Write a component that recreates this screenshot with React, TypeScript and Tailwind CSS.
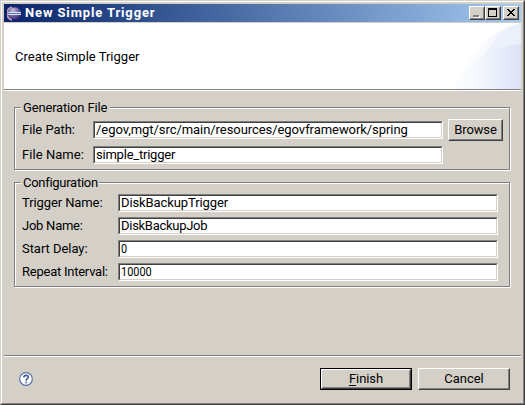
import React from "react";

const sunken =
  "box-border h-[18px] border border-t-[#808080] border-l-[#808080] border-b-white border-r-white";
const sunkenInner =
  "flex h-full items-center border border-t-[#404040] border-l-[#404040] border-b-[#d4d0c8] border-r-[#d4d0c8] bg-white pl-[1px] leading-[14px] whitespace-pre";
const raised =
  "border border-t-white border-l-white border-b-[#404040] border-r-[#404040] bg-[#d4d0c8]";
const raisedInner =
  "flex h-full w-full items-center justify-center border border-t-[#d4d0c8] border-l-[#d4d0c8] border-b-[#808080] border-r-[#808080]";

function Field({ value, width, track }: { value: string; width: string; track: string }) {
  return (
    <div className={`${sunken} ${width}`}>
      <div className={sunkenInner}>
        <span className={`inline-block origin-left ${track}`}>{value}</span>
      </div>
    </div>
  );
}

function Label({ text, width, track }: { text: string; width: string; track: string }) {
  return <label className={`shrink-0 whitespace-pre leading-[18px] ${width} ${track}`}>{text}</label>;
}

function Group({ title, width, track, className, children }: {
  title: string;
  width: string;
  track: string;
  className: string;
  children: React.ReactNode;
}) {
  return (
    <section className={`ml-[10px] w-[496px] border border-[#808080] shadow-[1px_1px_0_#fff,inset_1px_1px_0_#fff] ${className}`}>
      <div className={`-mt-[9px] ml-[6px] h-[18px] bg-[#d4d0c8] pl-[2px] leading-[18px] whitespace-pre ${width} ${track}`}>
        {title}
      </div>
      {children}
    </section>
  );
}

function TitleBar() {
  return (
    <header className="flex h-[18px] items-center bg-linear-to-r from-[#0a246a] to-[#a6caf0] pr-[2px] pl-[3px]">
      <svg width="15" height="15" viewBox="0 0 15 15" className="shrink-0">
        <defs>
          <radialGradient id="orb" cx=".35" cy=".25" r=".8">
            <stop offset="0" stopColor="#c9bbdb" />
            <stop offset=".5" stopColor="#7a69a8" />
            <stop offset="1" stopColor="#2b2468" />
          </radialGradient>
        </defs>
        <path d="M5 1.2A6.5 6.5 0 0 0 5 13.8" fill="none" stroke="#b79ab5" strokeWidth="2" />
        <circle cx="7.8" cy="7.5" r="6.3" fill="url(#orb)" />
        <path d="M2 7.5h12" stroke="#5c74b4" strokeWidth="1" />
        <path d="M1 6.5h13M1 8.5h13" stroke="#d6e4fa" strokeWidth="1" />
      </svg>
      <h1 className="ml-[3px] text-[13px] leading-[18px] font-bold tracking-[0.87px] whitespace-pre text-white">
        New Simple Trigger
      </h1>
      <div className="ml-auto flex h-[14px]">
        <button aria-label="Minimize" className={`h-[14px] w-4 ${raised}`}>
          <span className={raisedInner}>
            <svg width="12" height="10" shapeRendering="crispEdges">
              <path d="M3 8h6v2H3z" fill="#fff" />
              <path d="M2 7h6v2H2z" fill="#808080" />
            </svg>
          </span>
        </button>
        <button aria-label="Maximize" className={`h-[14px] w-4 ${raised}`}>
          <span className={raisedInner}>
            <svg width="12" height="10" shapeRendering="crispEdges">
              <path d="M1 0h9v9H1zM2 2v6h7V2z" fill="#000" fillRule="evenodd" />
            </svg>
          </span>
        </button>
        <button aria-label="Close" className={`ml-[2px] h-[14px] w-4 ${raised}`}>
          <span className={raisedInner}>
            <svg width="12" height="10" shapeRendering="crispEdges">
              <path
                d="M2 1h2v1h1v1h2V2h1V1h2v1H9v1H8v1H7v1h1v1h1v1h1v1H8V7H7V6H5v1H4v1H2V7h1V6h1V5h1V4H4V3H3V2H2z"
                fill="#000"
              />
            </svg>
          </span>
        </button>
      </div>
    </header>
  );
}

function Banner() {
  return (
    <div className="mt-px flex h-[66px] justify-between bg-white">
      <p className="mt-[25px] ml-[11px] leading-[18px] whitespace-pre">Create Simple Trigger</p>
      <svg width="74" height="66" viewBox="0 0 74 66">
        <defs>
          <linearGradient id="haze" x1="0" x2="1">
            <stop offset="0" stopColor="#fff" />
            <stop offset=".45" stopColor="#f9fbfe" />
            <stop offset="1" stopColor="#ebf0fb" />
          </linearGradient>
          <linearGradient id="swell" x1="0" x2="1">
            <stop offset="0" stopColor="#fff" />
            <stop offset=".4" stopColor="#f3f7fd" />
            <stop offset=".75" stopColor="#e5ebf9" />
            <stop offset="1" stopColor="#dbe2f7" />
          </linearGradient>
        </defs>
        <path d="M3 66C19 34 44 6 74 0V66z" fill="url(#haze)" />
        <path d="M34 40C43 19 57 5 74 0V40z" fill="#e9effb" opacity=".75" />
        <path d="M3 66C20 38 46 24 74 21V66z" fill="url(#swell)" />
      </svg>
    </div>
  );
}

export default function App() {
  return (
    <div className="h-[405px] w-[525px] overflow-hidden border border-t-[#d4d0c8] border-l-[#d4d0c8] border-b-[#404040] border-r-[#404040] bg-[#d4d0c8] font-['Roboto','Liberation_Sans',sans-serif] text-[13px] text-black">
      <div className="h-full border border-t-white border-l-white border-b-[#808080] border-r-[#808080] p-[2px]">
        <TitleBar />
        <Banner />
        <div className="h-[2px] border-t border-[#808080] bg-white" />

        <Group title="Generation File" width="w-[89px]" track="tracking-[-0.17px]" className="mt-4 h-[63px]">
          <div className="-mt-[9px] ml-[7px] flex">
            <div className="flex flex-col gap-[7px] pt-[13px]">
              <div className="flex">
                <Label text="File Path:" width="w-[71px]" track="tracking-[-0.05px]" />
                <Field value="/egov,mgt/src/main/resources/egovframework/spring" width="w-[350px]" track="tracking-[-0.06px]" />
              </div>
              <div className="flex">
                <Label text="File Name:" width="w-[71px]" track="tracking-[0.05px]" />
                <Field value="simple_trigger" width="w-[350px]" track="tracking-[-0.22px]" />
              </div>
            </div>
            <button className={`mt-[11px] ml-[5px] h-[22px] w-[55px] ${raised}`}>
              <span className={`${raisedInner} pb-px tracking-[-0.1px]`}>Browse</span>
            </button>
          </div>
        </Group>

        <Group title="Configuration" width="w-[78px]" track="tracking-[-0.28px]" className="mt-3 h-[105px]">
          <div className="mt-[2px] ml-[7px] flex flex-col gap-[5px]">
            <div className="flex">
              <Label text="Trigger Name:" width="w-[96px]" track="tracking-[-0.1px]" />
              <Field value="DiskBackupTrigger" width="w-[380px]" track="tracking-[-0.1px]" />
            </div>
            <div className="flex">
              <Label text="Job Name:" width="w-[96px]" track="tracking-[-0.25px]" />
              <Field value="DiskBackupJob" width="w-[380px]" track="tracking-[-0.28px]" />
            </div>
            <div className="flex">
              <Label text="Start Delay:" width="w-[96px]" track="tracking-[-0.05px]" />
              <Field value="0" width="w-[380px]" track="scale-x-[0.84]" />
            </div>
            <div className="flex">
              <Label text="Repeat Interval:" width="w-[96px]" track="tracking-[-0.24px]" />
              <Field value="10000" width="w-[380px]" track="scale-x-[0.84]" />
            </div>
          </div>
        </Group>

        <footer className="mt-[68px] border-t border-[#808080] shadow-[inset_0_1px_0_#fff]">
          <div className="flex items-start pt-3 pl-[15px]">
            <svg width="14" height="14" viewBox="0 0 14 14" className="mt-1">
              <circle cx="7" cy="7" r="6.3" fill="#fff" stroke="#5c74a4" strokeWidth="1.2" />
              <path d="M4.8 5.4C4.8 2.7 9.4 2.7 9.3 5.1 9.3 6.6 7.2 6.8 7.2 8.7M7.2 9.7v1.6" fill="none" stroke="#3f5a93" strokeWidth="1.6" />
            </svg>
            <button className="ml-[287px] h-[22px] w-[92px] border border-black">
              <span className={`block h-full ${raised}`}>
                <span className={`${raisedInner} pb-px tracking-[-0.1px]`}>
                  <span className="underline underline-offset-2">F</span>inish
                </span>
              </span>
            </button>
            <button className={`ml-[6px] h-[22px] w-[92px] ${raised}`}>
              <span className={`${raisedInner} pb-px`}>Cancel</span>
            </button>
          </div>
        </footer>
      </div>
    </div>
  );
}
